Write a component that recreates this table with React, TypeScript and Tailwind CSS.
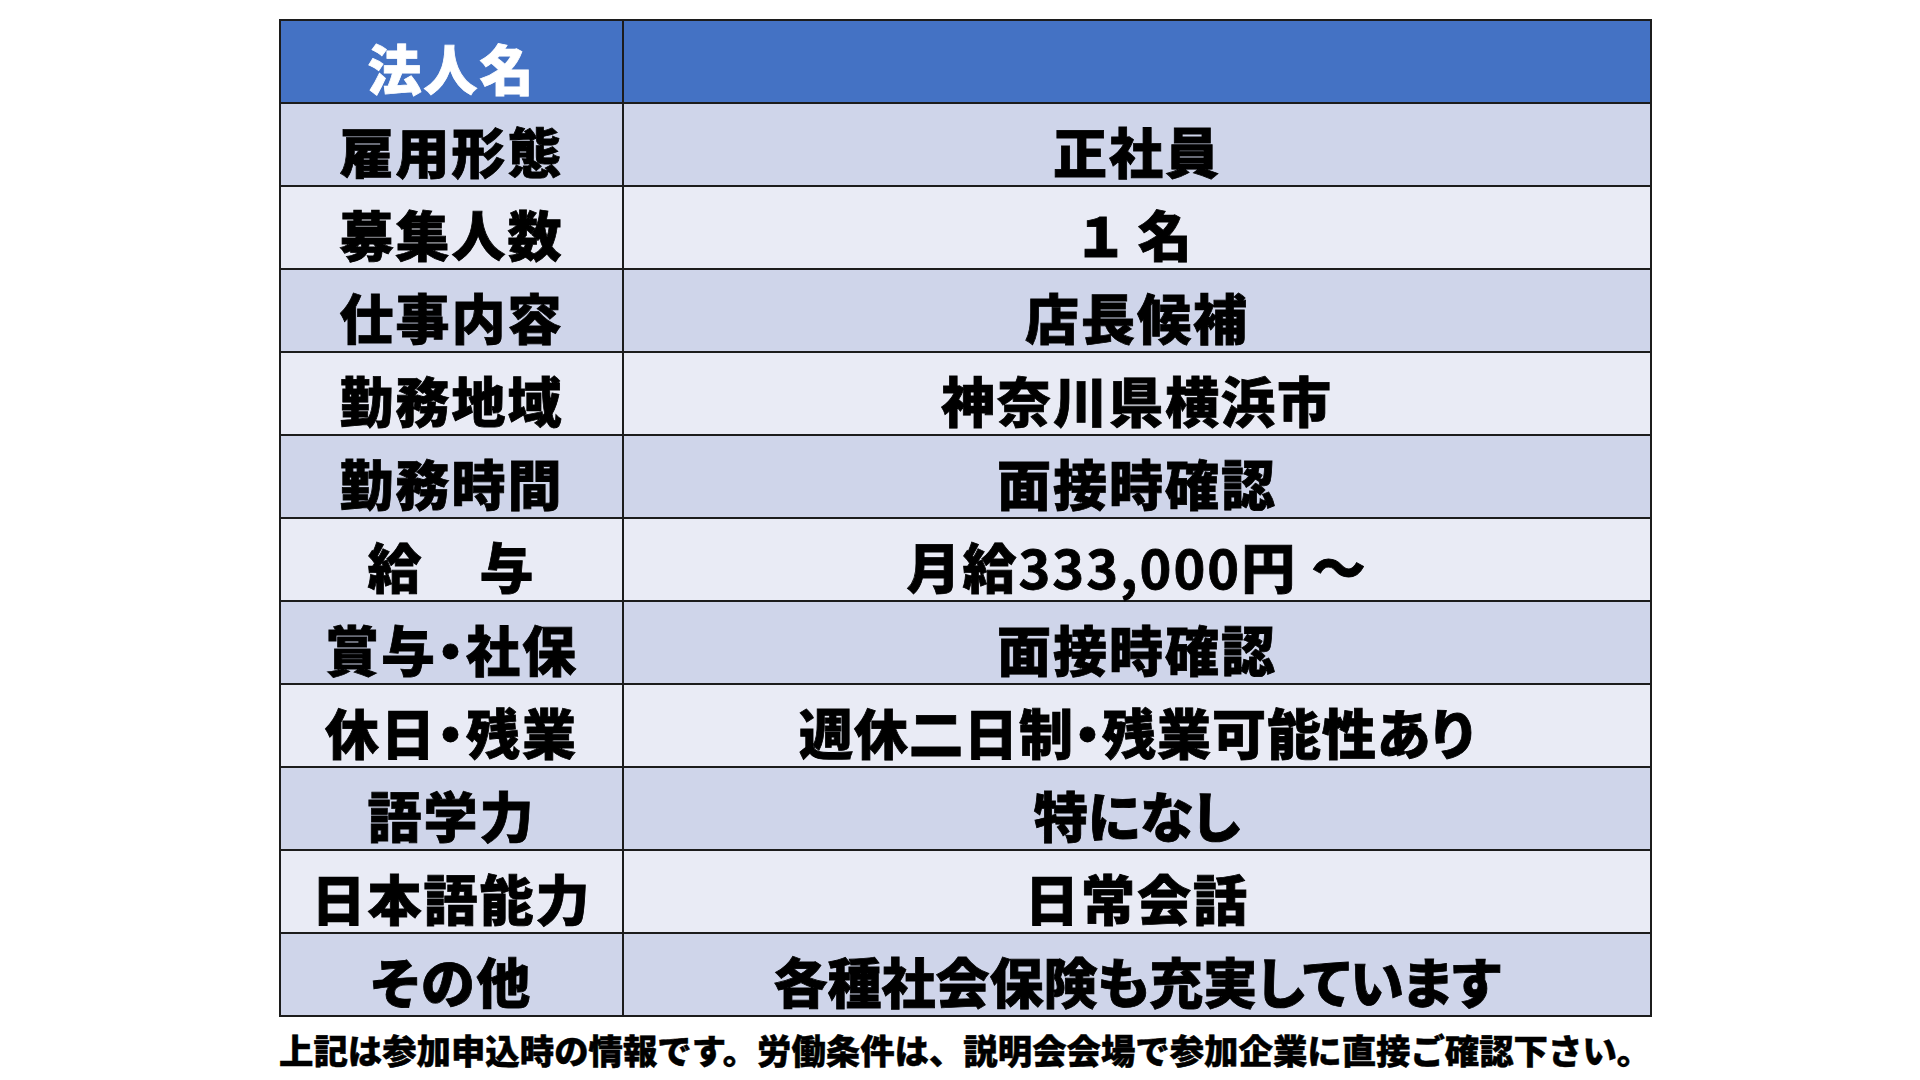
import React from "react";

type Row = {
  label: string;
  value: React.ReactNode;
  tracking?: string;
};

// 求人情報の表の中身
const rows: Row[] = [
  { label: "雇用形態", value: "正社員" },
  { label: "募集人数", value: "１ 名" },
  { label: "仕事内容", value: "店長候補" },
  { label: "勤務地域", value: "神奈川県横浜市" },
  { label: "勤務時間", value: "面接時確認" },
  {
    label: "給　与",
    value: (
      <>
        月給<span className="font-bold">333,000</span>円 ～
      </>
    ),
  },
  { label: "賞与・社保", value: "面接時確認" },
  { label: "休日・残業", value: "週休二日制・残業可能性あり", tracking: "tracking-[1px]" },
  { label: "語学力", value: "特になし", tracking: "tracking-[0px]" },
  { label: "日本語能力", value: "日常会話" },
  { label: "その他", value: "各種社会保険も充実しています", tracking: "tracking-[0px]" },
];

const cellBase =
  "h-[83px] border-r-2 border-b-2 border-[#1c1c1c] flex items-center justify-center pt-[12px] leading-none whitespace-nowrap [font-feature-settings:'palt'] [-webkit-text-stroke:0.8px_currentColor]";

const App: React.FC = () => {
  return (
    <div className="w-[1920px] h-[1080px] bg-white font-['Noto_Sans_CJK_JP',sans-serif] overflow-hidden">
      <div className="ml-[279px] pt-[19px] w-[1373px]">
        <div className="grid grid-cols-[343px_1fr] border-t-2 border-l-2 border-[#1c1c1c]">
          {/* header */}
          <div className={`${cellBase} bg-[#4472c4] text-white text-[54px] font-black tracking-[2px]`}>
            法人名
          </div>
          <div className={`${cellBase} bg-[#4472c4]`} />

          {rows.map((row, i) => {
            const bg = i % 2 === 0 ? "bg-[#cfd5ea]" : "bg-[#e9ebf5]";
            return (
              <React.Fragment key={row.label}>
                <div className={`${cellBase} ${bg} text-black text-[54px] font-black tracking-[2px]`}>
                  {row.label}
                </div>
                <div
                  className={`${cellBase} ${bg} text-black text-[54px] font-black ${row.tracking ?? "tracking-[2px]"}`}
                >
                  {row.value}
                </div>
              </React.Fragment>
            );
          })}
        </div>

        <p className="mt-[12px] text-[34.4px] font-black leading-[40px] text-black whitespace-nowrap [-webkit-text-stroke:0.5px_currentColor]">
          上記は参加申込時の情報です。労働条件は、説明会会場で参加企業に直接ご確認下さい。
        </p>
      </div>
    </div>
  );
};

export default App;
